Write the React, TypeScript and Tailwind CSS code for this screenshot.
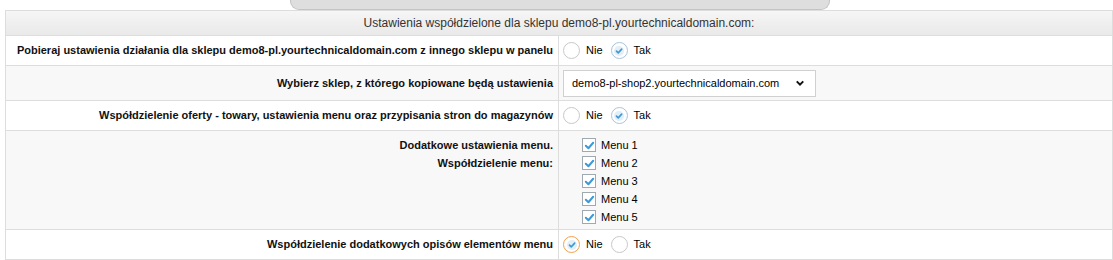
const font = { fontFamily: '"Liberation Sans", Arial, sans-serif' };

function Radio({ checked, focus }: { checked?: boolean; focus?: boolean }) {
  return (
    <span
      className={`grid h-[17px] w-[17px] place-items-center rounded-full border bg-white ${
        focus ? "border-[#f0a050]" : checked ? "border-[#a9c3d8]" : "border-[#c8c8c8]"
      }`}
    >
      {checked && (
        <svg viewBox="0 0 12 12" className="h-[10px] w-[10px]">
          <circle cx="6" cy="6" r="6" fill="#e3eef7" />
          <path d="M3 6.2 5.1 8.2 9.2 3.8" fill="none" stroke="#3d9ad6" strokeWidth="2" strokeLinecap="round" strokeLinejoin="round" />
        </svg>
      )}
    </span>
  );
}

function RadioPair({ value }: { value: "Nie" | "Tak" }) {
  return (
    <div className="flex items-center gap-[6px] text-[11px] text-black">
      <Radio checked={value === "Nie"} focus={value === "Nie"} />
      <span className="mr-[2px]">Nie</span>
      <Radio checked={value === "Tak"} />
      <span>Tak</span>
    </div>
  );
}

function Check({ label }: { label: string }) {
  return (
    <div className="flex h-[18px] items-center gap-[5px] text-[11px] text-black">
      <span className="grid h-[14px] w-[14px] place-items-center border border-[#a0a8b0] bg-white">
        <svg viewBox="0 0 12 12" className="h-[11px] w-[11px]">
          <path d="M2 6.3 4.8 9 10 3" fill="none" stroke="#3d9ad6" strokeWidth="2.2" strokeLinecap="round" strokeLinejoin="round" />
        </svg>
      </span>
      {label}
    </div>
  );
}

function Row({ label, children, shade }: { label: React.ReactNode; children: React.ReactNode; shade?: boolean }) {
  return (
    <div className={`grid grid-cols-[553px_1fr] border-t border-[#dddddd] ${shade ? "bg-[#f8f8f8]" : "bg-white"}`}>
      <div className="whitespace-nowrap border-r border-[#dddddd] pr-[5px] text-right text-[11px] font-bold text-[#111]">{label}</div>
      <div className="pl-[4px]">{children}</div>
    </div>
  );
}

export default function App() {
  return (
    <div className="h-[260px] w-[1113px] bg-white" style={font}>
      <div className="ml-[290px] h-[10px] w-[540px] rounded-b-[9px] border border-t-0 border-[#c4c4c4] bg-[#dedede]" />
      <div className="ml-[5px] w-[1108px] border border-[#dddddd]">
        <div className="flex h-[24px] items-center justify-center bg-gradient-to-b from-[#f6f6f6] to-[#e9e9e9] text-[12px] text-[#333]">
          Ustawienia współdzielone dla sklepu demo8-pl.yourtechnicaldomain.com:
        </div>
        <Row label={<div className="flex h-[29px] items-center justify-end">Pobieraj ustawienia działania dla sklepu demo8-pl.yourtechnicaldomain.com z innego sklepu w panelu</div>}>
          <div className="flex h-[29px] items-center">
            <RadioPair value="Tak" />
          </div>
        </Row>
        <Row shade label={<div className="flex h-[34px] items-center justify-end">Wybierz sklep, z którego kopiowane będą ustawienia</div>}>
          <div className="flex h-[34px] items-center">
            <div className="flex h-[27px] w-[253px] items-center justify-between border border-[#d0d0d0] bg-white pl-[8px] pr-[10px] text-[11px] text-black">
              <span className="whitespace-nowrap">demo8-pl-shop2.yourtechnicaldomain.com</span>
              <svg viewBox="0 0 10 8" className="h-[7px] w-[10px] shrink-0">
                <path d="M1.3 1.6 5 5.3 8.7 1.6" fill="none" stroke="#111" strokeWidth="2.3" />
              </svg>
            </div>
          </div>
        </Row>
        <Row label={<div className="flex h-[29px] items-center justify-end">Współdzielenie oferty - towary, ustawienia menu oraz przypisania stron do magazynów</div>}>
          <div className="flex h-[29px] items-center">
            <RadioPair value="Tak" />
          </div>
        </Row>
        <Row
          shade
          label={
            <div className="flex h-[98px] flex-col items-end pt-[5px] leading-[18px]">
              <span>Dodatkowe ustawienia menu.</span>
              <span>Współdzielenie menu:</span>
            </div>
          }
        >
          <div className="flex flex-col pl-[19px] pt-[5px]">
            <Check label="Menu 1" />
            <Check label="Menu 2" />
            <Check label="Menu 3" />
            <Check label="Menu 4" />
            <Check label="Menu 5" />
          </div>
        </Row>
        <Row label={<div className="flex h-[29px] items-center justify-end">Współdzielenie dodatkowych opisów elementów menu</div>}>
          <div className="flex h-[29px] items-center">
            <RadioPair value="Nie" />
          </div>
        </Row>
      </div>
    </div>
  );
}
